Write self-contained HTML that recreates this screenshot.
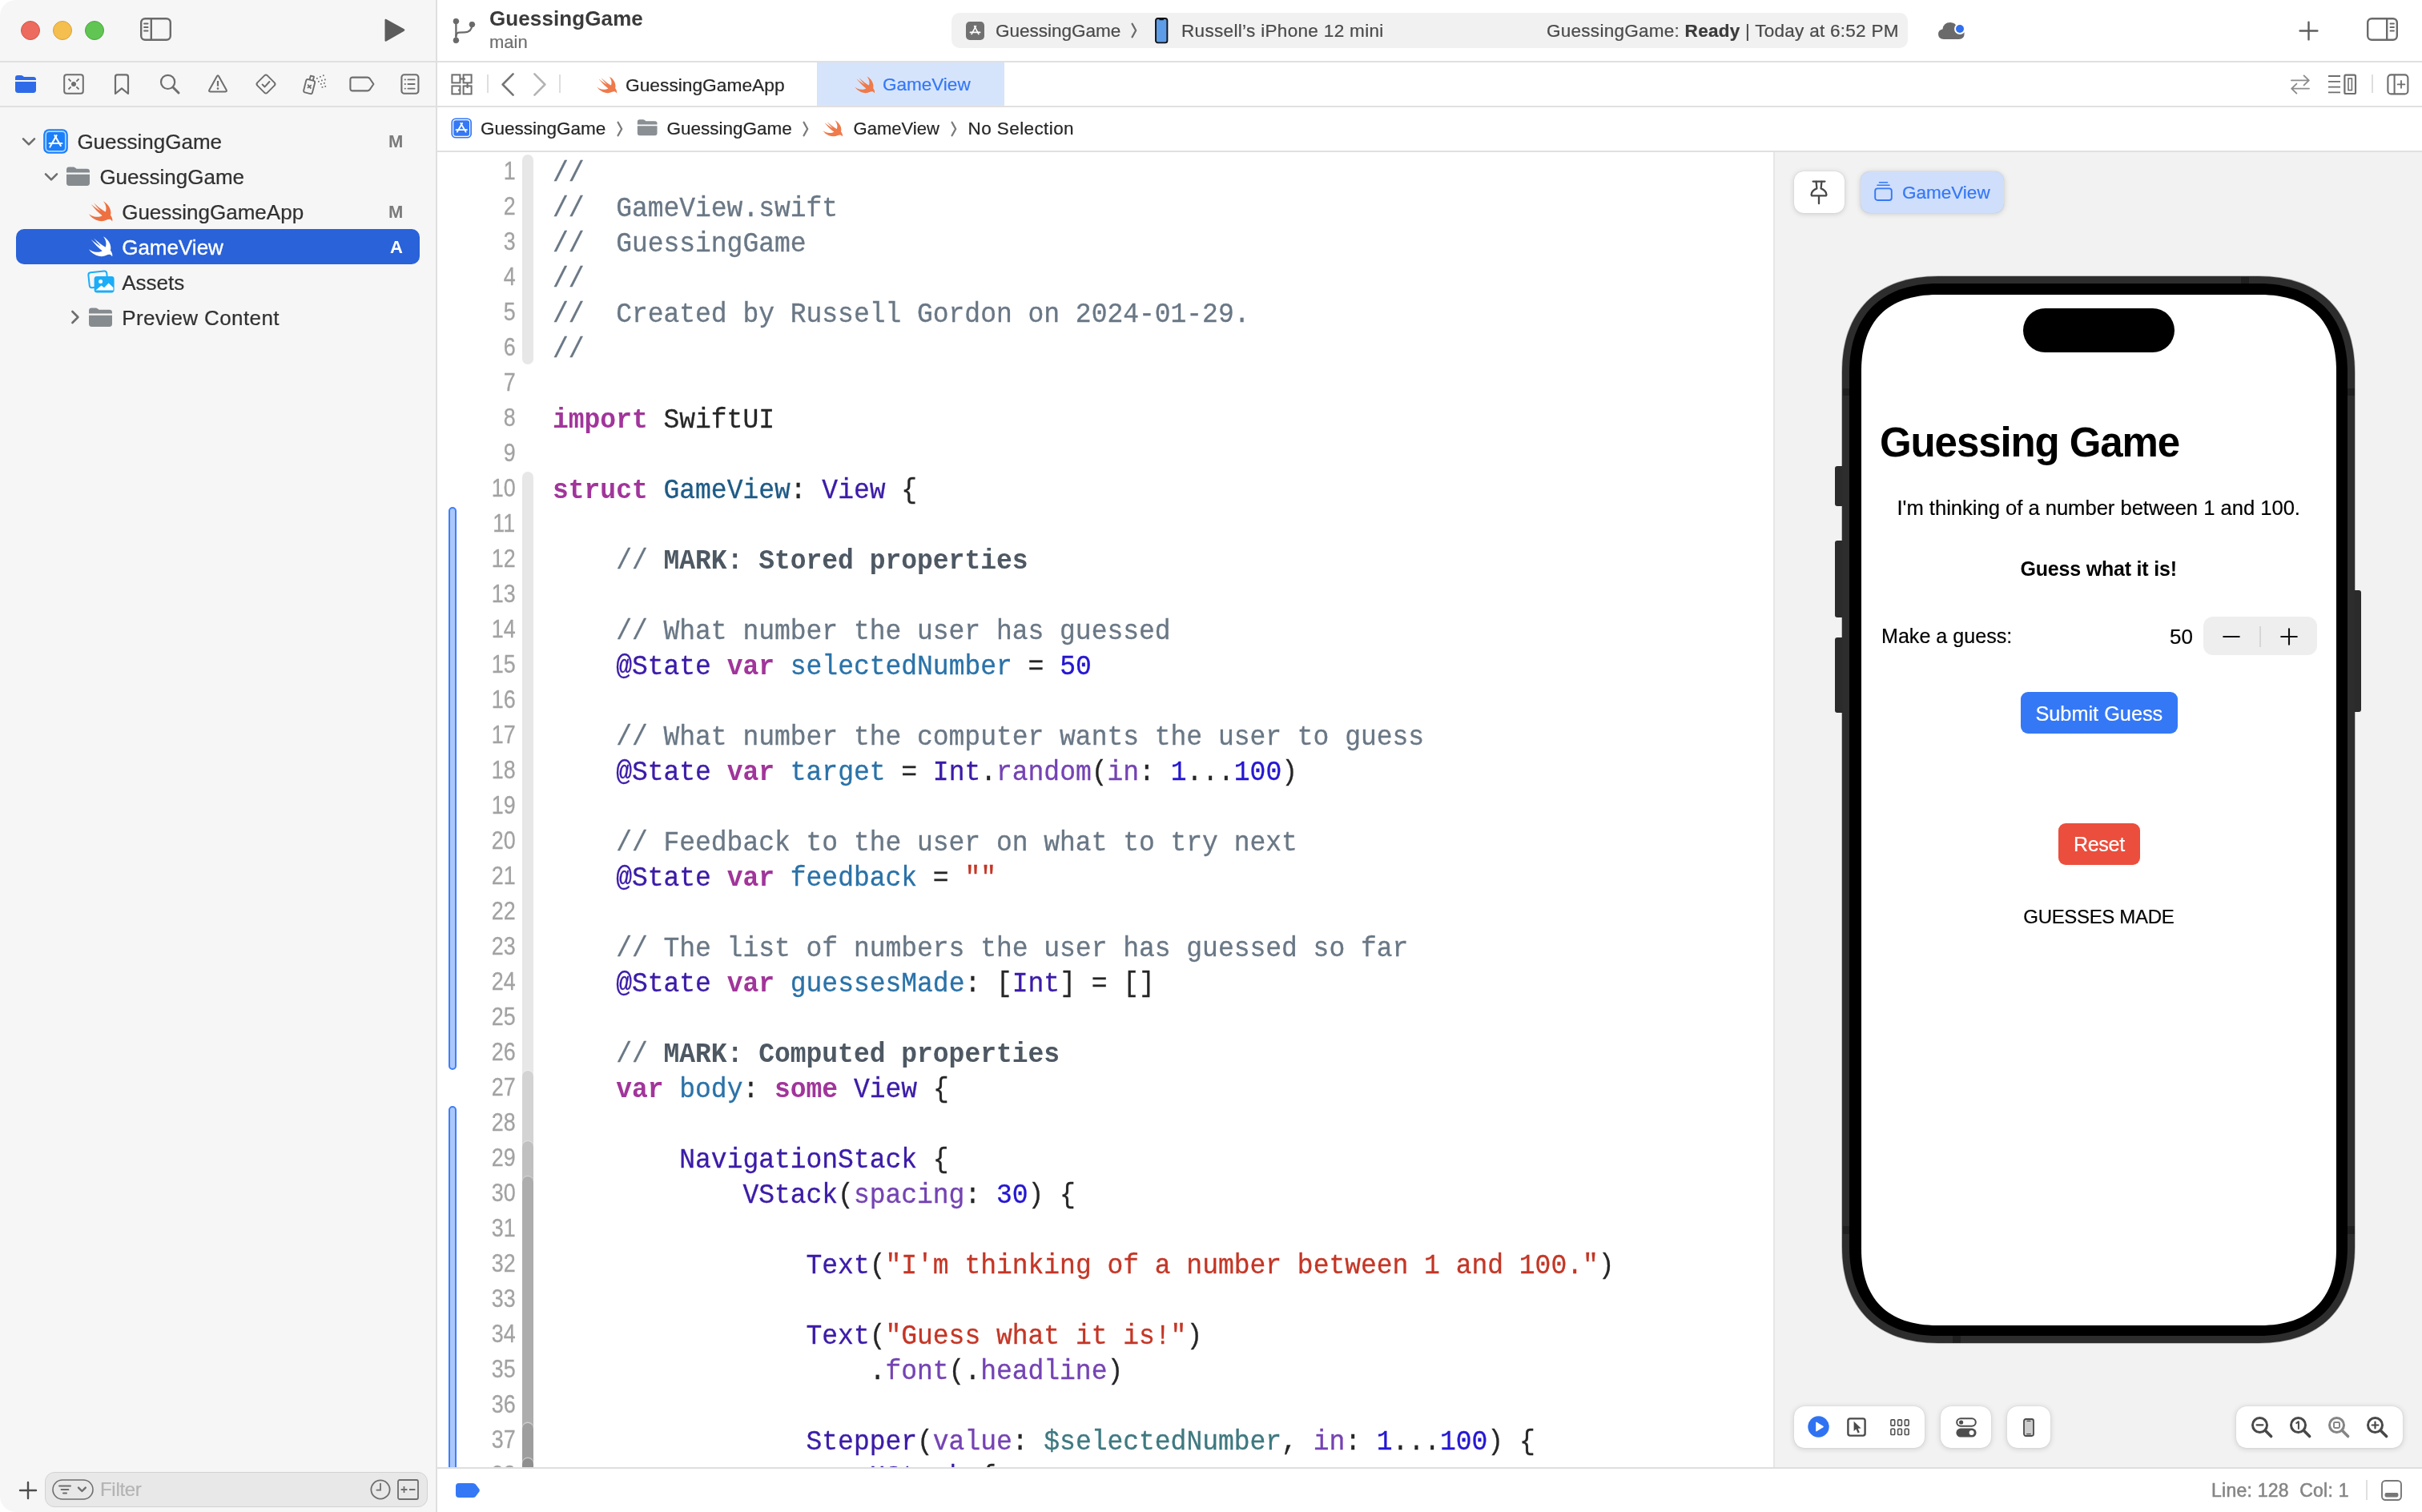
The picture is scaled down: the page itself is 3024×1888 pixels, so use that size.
<!DOCTYPE html>
<html lang="en">
<head>
<meta charset="utf-8">
<title>GuessingGame — GameView.swift</title>
<style>
*{box-sizing:border-box;margin:0;padding:0}
html,body{width:3024px;height:1888px;overflow:hidden;background:#fff}
body{font-family:"Liberation Sans",sans-serif;color:#262626;position:relative;-webkit-font-smoothing:antialiased}
.abs{position:absolute}
.t{position:absolute;white-space:pre;line-height:1;-webkit-text-stroke:.22px}
svg{position:absolute;overflow:visible}
#win{position:absolute;left:0;top:0;width:3024px;height:1888px;overflow:hidden;border-radius:20px 0 0 20px;will-change:transform}
#sidebar{position:absolute;left:0;top:0;width:544px;height:1888px;background:#f6f6f6}
.hl{position:absolute;height:2px;background:#e0e0e0}
.vl{position:absolute;width:2px;background:#dfdfdf}
.ui{font-size:22.5px;color:#262626}
.row{position:absolute;left:0;width:544px;height:44px}
.row .t{top:9.5px;font-size:26px;color:#313131}
.badge{position:absolute;top:12px;font-size:22px;font-weight:700;color:#7b7b7b;line-height:1}
/* code */
#code{position:absolute;left:546px;top:190px;width:1668px;height:1642px;overflow:hidden;background:#fff}
.ln{position:absolute;left:0;height:44px;width:1668px}
.ln .n{position:absolute;right:1570.6px;top:6.3px;font-size:32px;color:#a2a2a2;line-height:30px;white-space:pre;transform:scaleX(.84);transform-origin:100% 50%;-webkit-text-stroke:.3px}
.ln .c{position:absolute;left:144px;top:4px;font-family:"Liberation Mono",monospace;font-size:33px;letter-spacing:-0.02px;line-height:44px;white-space:pre;color:#262626;-webkit-text-stroke:.3px;transform:scaleY(1.05);transform-origin:0 30.8px}
.cm{color:#697785}.mk{color:#4d5863;font-weight:700;-webkit-text-stroke:0}.kw{color:#a1359a;font-weight:700;-webkit-text-stroke:0}
.dc{color:#2a72a8}.td{color:#1d5a86}.ty{color:#3b1ba8}.fn{color:#7443b3}.nu{color:#2416d2}.st{color:#c43626}.pv{color:#3f7980}
/* preview */
#canvas{position:absolute;left:2216px;top:190px;width:808px;height:1642px;background:#f2f2f2}
.btn{position:absolute;background:#fff;border-radius:13px;box-shadow:0 0 1px rgba(0,0,0,.18),0 1px 7px rgba(0,0,0,.17)}
.ph{position:absolute;white-space:pre;line-height:1;color:#000;-webkit-text-stroke:.2px}
</style>
</head>
<body>
<div id="win">
<div id="sidebar">
  <!-- traffic lights -->
  <div class="abs" style="left:26px;top:26px;width:24px;height:24px;border-radius:50%;background:#ed6a5e;border:1px solid #d5544a"></div>
  <div class="abs" style="left:66px;top:26px;width:24px;height:24px;border-radius:50%;background:#f5bf4f;border:1px solid #d8a13a"></div>
  <div class="abs" style="left:106px;top:26px;width:24px;height:24px;border-radius:50%;background:#61c554;border:1px solid #4aa73c"></div>
  <!-- sidebar toggle -->
  <svg style="left:174px;top:21.3px" width="41" height="31" viewBox="0 0 41 31" fill="none" stroke="#6a6a6a" stroke-width="2.4" stroke-linecap="round">
    <rect x="2.2" y="2.2" width="36.6" height="26.6" rx="5"/>
    <line x1="14.8" y1="2.5" x2="14.8" y2="28.5" stroke-linecap="butt"/>
    <g stroke-width="1.8"><line x1="6" y1="8.5" x2="10.6" y2="8.5"/><line x1="6" y1="13" x2="10.6" y2="13"/><line x1="6" y1="17.5" x2="10.6" y2="17.5"/></g>
  </svg>
  <!-- run -->
  <svg style="left:478px;top:22px" width="30" height="32" viewBox="0 0 30 32"><path d="M2.5 3.2 Q2.5 1.2 4.3 2.1 L26.6 14.3 Q28.3 15.5 26.6 16.7 L4.3 29.4 Q2.5 30.3 2.5 28.3 Z" fill="#5c5c5c"/></svg>
  <div class="hl" style="left:0;top:76px;width:544px"></div>
  <!-- navigator icons -->
  <svg style="left:18px;top:92px" width="28" height="26" viewBox="0 0 28 26"><path d="M1 5.2 Q1 2 4.2 2 H8 Q9.6 2 10.8 3 L12 4 H23.6 Q27 4 27 7.2 V8 H1 Z M1 10 H27 V20.6 Q27 24 23.6 24 H4.4 Q1 24 1 20.6 Z" fill="#2f6be8"/></svg>
  <svg style="left:79px;top:92px" width="26" height="26" viewBox="0 0 26 26" fill="none" stroke="#6e6e6e" stroke-width="2"><rect x="1.2" y="1.2" width="23.6" height="23.6" rx="3"/><circle cx="13" cy="13" r="3" fill="#6e6e6e" stroke="none"/><path d="M6.5 6.5 L9.6 9.6 M19.5 6.5 L16.4 9.6 M6.5 19.5 L9.6 16.4 M19.5 19.5 L16.4 16.4" stroke-width="1.8"/></svg>
  <svg style="left:142px;top:92px" width="20" height="27" viewBox="0 0 20 27" fill="none" stroke="#6e6e6e" stroke-width="2.2" stroke-linejoin="round"><path d="M2 4 Q2 1.4 4.4 1.4 H15.6 Q18 1.4 18 4 V25 L10 18.4 L2 25 Z"/></svg>
  <svg style="left:198px;top:91px" width="28" height="28" viewBox="0 0 28 28" fill="none" stroke="#6e6e6e" stroke-width="2.2" stroke-linecap="round"><circle cx="11.6" cy="11.4" r="8.6"/><line x1="18" y1="18" x2="25" y2="25" stroke-width="3"/></svg>
  <svg style="left:259px;top:91px" width="26" height="26" viewBox="0 0 26 26" fill="none" stroke="#6e6e6e" stroke-width="2" stroke-linejoin="round"><path d="M11.7 4.4 Q13 2 14.3 4.4 L23.6 21.2 Q24.8 23.4 22.4 23.4 H3.6 Q1.2 23.4 2.4 21.2 Z"/><line x1="13" y1="10" x2="13" y2="16.6" stroke-width="2.2"/><circle cx="13" cy="19.6" r="1.3" fill="#6e6e6e" stroke="none"/></svg>
  <svg style="left:318px;top:91px" width="28" height="28" viewBox="0 0 28 28" fill="none" stroke="#6e6e6e" stroke-width="2" stroke-linejoin="round" stroke-linecap="round"><rect x="5.2" y="5.2" width="17.6" height="17.6" rx="2.6" transform="rotate(45 14 14)"/><path d="M9.6 14.6 L12.6 17.4 L18.4 11"/></svg>
  <svg style="left:377px;top:91px" width="31" height="29" viewBox="0 0 31 29" fill="none" stroke="#6e6e6e" stroke-width="1.9" stroke-linejoin="round"><path d="M5.2 9.6 Q5.8 7.6 7.8 8.1 L14.6 9.9 Q16.6 10.4 16.1 12.4 L13 24.6 Q12.5 26.6 10.5 26.1 L3.7 24.3 Q1.7 23.8 2.2 21.8 Z"/><path d="M9.6 8.3 L10.9 3.6 L15 4.7 L13.8 9.4"/><path d="M7.2 14.6 L11.4 19.6 M11.8 15.3 L6.8 18.9" stroke-width="1.7"/><g fill="#6e6e6e" stroke="none"><rect x="18" y="6" width="1.7" height="1.7"/><rect x="22" y="4" width="1.7" height="1.7"/><rect x="26" y="2.4" width="1.7" height="1.7"/><rect x="20" y="10" width="1.7" height="1.7"/><rect x="24" y="8.6" width="1.7" height="1.7"/><rect x="28" y="7.6" width="1.7" height="1.7"/><rect x="23" y="13" width="1.7" height="1.7"/><rect x="27" y="12" width="1.7" height="1.7"/><rect x="24.6" y="17" width="1.7" height="1.7"/><rect x="28.4" y="16" width="1.7" height="1.7"/></g></svg>
  <svg style="left:436px;top:95px" width="32" height="20" viewBox="0 0 32 20" fill="none" stroke="#6e6e6e" stroke-width="2.1" stroke-linejoin="round"><path d="M4.4 1.6 H22.6 Q24.4 1.6 25.6 3 L30.4 10 L25.6 17 Q24.4 18.4 22.6 18.4 H4.4 Q1.4 18.4 1.4 15.6 V4.4 Q1.4 1.6 4.4 1.6 Z"/></svg>
  <svg style="left:500px;top:92px" width="24" height="26" viewBox="0 0 24 26" fill="none" stroke="#6e6e6e" stroke-width="2.1" stroke-linecap="round"><rect x="1.4" y="1.2" width="21" height="23.6" rx="3.4"/><g stroke-width="1.8"><line x1="9.4" y1="7.4" x2="17.6" y2="7.4"/><line x1="9.4" y1="13" x2="17.6" y2="13"/><line x1="9.4" y1="18.6" x2="17.6" y2="18.6"/><line x1="5.6" y1="7.4" x2="6" y2="7.4"/><line x1="5.6" y1="13" x2="6" y2="13"/><line x1="5.6" y1="18.6" x2="6" y2="18.6"/></g></svg>
  <div class="hl" style="left:0;top:132px;width:544px"></div>

  <!-- tree -->
  <div class="row" style="top:154px">
    <svg style="left:27.1px;top:16.8px" width="18" height="12" viewBox="0 0 18 12" fill="none" stroke="#6e6e6e" stroke-width="2.6" stroke-linecap="round" stroke-linejoin="round"><path d="M2 2.4 L9 9.4 L16 2.4"/></svg>
    <svg style="left:54px;top:6.6px" width="31" height="31" viewBox="0 0 31 31"><rect x="0.2" y="0.2" width="30.6" height="30.6" rx="6.8" fill="#1a7ffa"/><rect x="3.2" y="3.2" width="24.6" height="24.6" rx="4" fill="none" stroke="#fff" stroke-opacity=".68" stroke-width="1.7"/><g stroke="#fff" stroke-width="2.1" stroke-linecap="round" fill="none"><path d="M16.6 8.2 L9.2 21"/><path d="M14.4 8.2 L21.8 21"/><path d="M7.6 18 H23.4"/></g><circle cx="8.4" cy="22.6" r="1.1" fill="#fff"/></svg>
    <div class="t" style="left:96.4px">GuessingGame</div>
    <div class="badge" style="left:485px">M</div>
  </div>
  <div class="row" style="top:198px">
    <svg style="left:55.3px;top:16.8px" width="18" height="12" viewBox="0 0 18 12" fill="none" stroke="#6e6e6e" stroke-width="2.6" stroke-linecap="round" stroke-linejoin="round"><path d="M2 2.4 L9 9.4 L16 2.4"/></svg>
    <svg style="left:82px;top:10px" width="31" height="25" viewBox="0 0 31 25"><path d="M1 3.8 Q1 0.4 4.4 0.4 H9.2 Q10.8 0.4 12 1.4 L13.6 2.8 H26.6 Q30 2.8 30 6.2 V7.6 H1 Z M1 9.8 H30 V20.6 Q30 24 26.6 24 H4.4 Q1 24 1 20.6 Z" fill="#868b90"/></svg>
    <div class="t" style="left:124.4px">GuessingGame</div>
  </div>
  <div class="row" style="top:242px">
    <svg style="left:106.7px;top:4.2px" width="39" height="37" viewBox="0 0 24 24" preserveAspectRatio="none"><path fill="#ee7040" d="M13.543 3.41c4.114 2.47 6.545 7.162 5.549 11.131-.024.093-.05.181-.076.272l.002.001c2.062 2.538 1.5 5.258 1.236 4.745-1.072-2.086-3.066-1.568-4.088-1.043a6.803 6.803 0 0 1-.281.158l-.02.012-.002.002c-2.115 1.123-4.957 1.205-7.812-.022a12.568 12.568 0 0 1-5.64-4.838c.649.48 1.35.902 2.097 1.252 3.019 1.414 6.051 1.311 8.197-.002C9.651 12.73 7.101 9.67 5.146 7.191a10.628 10.628 0 0 1-1.005-1.384c2.34 2.142 6.038 4.83 7.365 5.576C8.69 8.408 6.208 4.743 6.324 4.86c4.436 4.47 8.528 6.996 8.528 6.996.154.085.27.154.36.213.085-.215.16-.437.224-.668.708-2.588-.09-5.548-1.893-7.992z"/></svg>
    <div class="t" style="left:152.2px">GuessingGameApp</div>
    <div class="badge" style="left:485px">M</div>
  </div>
  <div class="abs" style="left:20px;top:286px;width:504px;height:44px;border-radius:10px;background:#2962d9"></div>
  <div class="row" style="top:286px">
    <svg style="left:106.7px;top:4.2px" width="39" height="37" viewBox="0 0 24 24" preserveAspectRatio="none"><path fill="#fff" d="M13.543 3.41c4.114 2.47 6.545 7.162 5.549 11.131-.024.093-.05.181-.076.272l.002.001c2.062 2.538 1.5 5.258 1.236 4.745-1.072-2.086-3.066-1.568-4.088-1.043a6.803 6.803 0 0 1-.281.158l-.02.012-.002.002c-2.115 1.123-4.957 1.205-7.812-.022a12.568 12.568 0 0 1-5.64-4.838c.649.48 1.35.902 2.097 1.252 3.019 1.414 6.051 1.311 8.197-.002C9.651 12.73 7.101 9.67 5.146 7.191a10.628 10.628 0 0 1-1.005-1.384c2.34 2.142 6.038 4.83 7.365 5.576C8.69 8.408 6.208 4.743 6.324 4.86c4.436 4.47 8.528 6.996 8.528 6.996.154.085.27.154.36.213.085-.215.16-.437.224-.668.708-2.588-.09-5.548-1.893-7.992z"/></svg>
    <div class="t" style="left:152.2px;color:#fff;-webkit-text-stroke:.35px #fff">GameView</div>
    <div class="badge" style="left:487px;color:#fff">A</div>
  </div>
  <div class="row" style="top:330px">
    <svg style="left:109px;top:7px" width="35" height="30" viewBox="0 0 35 30"><rect x="2" y="2.4" width="23" height="19" rx="3" fill="#f6f6f6" stroke="#1badf8" stroke-width="2" transform="rotate(-6 13 12)"/><rect x="8.6" y="8" width="25" height="20.4" rx="3.4" fill="#1badf8"/><circle cx="16.6" cy="14.4" r="2.5" fill="#fff"/><path d="M10.4 25.6 L17.6 19.4 L21 22.2 L26.6 16.4 L32.4 22 V25.6 Z" fill="#fff"/></svg>
    <div class="t" style="left:152.2px">Assets</div>
  </div>
  <div class="row" style="top:374px">
    <svg style="left:88px;top:13px" width="12" height="18" viewBox="0 0 12 18" fill="none" stroke="#6e6e6e" stroke-width="2.6" stroke-linecap="round" stroke-linejoin="round"><path d="M2.4 2 L9.4 9 L2.4 16"/></svg>
    <svg style="left:110px;top:10px" width="31" height="25" viewBox="0 0 31 25"><path d="M1 3.8 Q1 0.4 4.4 0.4 H9.2 Q10.8 0.4 12 1.4 L13.6 2.8 H26.6 Q30 2.8 30 6.2 V7.6 H1 Z M1 9.8 H30 V20.6 Q30 24 26.6 24 H4.4 Q1 24 1 20.6 Z" fill="#868b90"/></svg>
    <div class="t" style="left:152.2px;letter-spacing:.4px">Preview Content</div>
  </div>

  <!-- bottom filter -->
  <svg style="left:23px;top:1849px" width="24" height="24" viewBox="0 0 24 24" stroke="#4d4d4d" stroke-width="2.4" stroke-linecap="round"><path d="M12 2 V22 M2 12 H22"/></svg>
  <div class="abs" style="left:56px;top:1838px;width:478px;height:44px;border-radius:12px;background:#e8e8e8;border:1px solid #d2d2d2"></div>
  <svg style="left:65px;top:1847px" width="52" height="26" viewBox="0 0 52 26" fill="none" stroke="#6e6e6e" stroke-width="2" stroke-linecap="round" stroke-linejoin="round"><rect x="1" y="1" width="50" height="24" rx="12" stroke-width="1.6"/><path d="M9 8.4 H23 M11.6 13 H20.4 M14 17.6 H18"/><path d="M33 10.6 L37.4 15 L41.8 10.6" stroke-width="2.4"/></svg>
  <div class="t" style="left:125px;top:1848px;font-size:24px;color:#b4b4b4;letter-spacing:-.3px">Filter</div>
  <svg style="left:462px;top:1847px" width="26" height="26" viewBox="0 0 26 26" fill="none" stroke="#6e6e6e" stroke-width="1.8" stroke-linecap="round"><circle cx="13" cy="13" r="11.6"/><path d="M13 5.6 V13.6 H8.4"/></svg>
  <svg style="left:496px;top:1847px" width="27" height="26" viewBox="0 0 27 26" fill="none" stroke="#6e6e6e" stroke-width="1.8"><rect x="1" y="1" width="25" height="24" rx="2"/><path d="M4.6 13 H12.4 M8.5 9 V17 M15 13 H22.4" stroke-width="1.8"/></svg>
</div>
<div class="vl" style="left:544px;top:0;height:1888px"></div>
<!-- title bar -->
<svg style="left:563px;top:21px" width="33" height="35" viewBox="0 0 33 35" fill="none" stroke="#6a6a6a" stroke-width="2.3" stroke-linecap="round"><circle cx="6.4" cy="5.6" r="3.3" fill="#6a6a6a" stroke-width="1"/><circle cx="6.4" cy="29.4" r="3.3" fill="#6a6a6a" stroke-width="1"/><circle cx="26.4" cy="9.6" r="3.3" fill="#6a6a6a" stroke-width="1"/><path d="M6.4 6 V29"/><path d="M26.4 10 Q26 19 17 19.4 L10 19.6 Q6.6 20 6.4 24"/></svg>
<div class="t" style="left:611px;top:10px;font-size:26px;font-weight:700;color:#3a3a3a;letter-spacing:.1px;-webkit-text-stroke:0">GuessingGame</div>
<div class="t" style="left:611px;top:42px;font-size:22px;color:#6f6f6f">main</div>

<div class="abs" style="left:1188px;top:16px;width:1194px;height:44px;border-radius:10px;background:#f1f1f1"></div>
<svg style="left:1206px;top:26.8px" width="23" height="23" viewBox="0 0 24 23" preserveAspectRatio="none"><rect x="0" y="0" width="24" height="23" rx="5" fill="#717171"/><g stroke="#fff" stroke-width="1.7" stroke-linecap="round" fill="none"><path d="M12.9 5.6 L7.4 15.6"/><path d="M11.1 5.6 L16.6 15.6"/><path d="M5.6 13.4 H18.4"/></g></svg>
<div class="t ui" style="left:1243px;top:28px;color:#4a4a4a">GuessingGame</div>
<svg style="left:1412px;top:28px" width="8" height="20" viewBox="0 0 8 20" fill="none" stroke="#6a6a6a" stroke-width="2.3" stroke-linecap="round" stroke-linejoin="round"><path d="M1.6 1.8 L6.2 10 L1.6 18.2"/></svg>
<svg style="left:1441.8px;top:21.8px" width="16.4" height="32.4" viewBox="0 0 16.4 32.4"><rect x="1" y="1" width="14.4" height="30.4" rx="2.6" fill="#5d9ce7" stroke="#111" stroke-width="1.9"/><rect x="5.4" y="1.4" width="5.6" height="1.9" rx=".9" fill="#111"/></svg>
<div class="t ui" style="left:1475px;top:28px;color:#4a4a4a;letter-spacing:.33px">Russell’s iPhone 12 mini</div>
<div class="t ui" style="left:1931px;top:28px;color:#4a4a4a;letter-spacing:.27px">GuessingGame: <b style="color:#3a3a3a">Ready</b> | Today at 6:52 PM</div>
<svg style="left:2419px;top:27px" width="36" height="23" viewBox="0 0 36 23"><path d="M8 22 Q1 22 1 15.6 Q1 10.4 6.4 9.6 Q7.4 1 16 1 Q22.4 1 24.6 7 Q33.6 7.4 33.6 15 Q33.6 22 26.6 22 Z" fill="#6a6a6a"/><circle cx="28" cy="9" r="7" fill="#fff"/><circle cx="28" cy="9" r="5" fill="#2f6ff0"/></svg>
<svg style="left:2870px;top:26px" width="25" height="25" viewBox="0 0 25 25" stroke="#5e5e5e" stroke-width="2.4" stroke-linecap="round"><path d="M12.5 1.6 V23.4 M1.6 12.5 H23.4"/></svg>
<svg style="left:2954px;top:21.3px" width="41" height="31" viewBox="0 0 41 31" fill="none" stroke="#6a6a6a" stroke-width="2.4" stroke-linecap="round"><rect x="2.2" y="2.2" width="36.6" height="26.6" rx="5"/><line x1="26.2" y1="2.5" x2="26.2" y2="28.5" stroke-linecap="butt"/><g stroke-width="1.8"><line x1="30.4" y1="8.5" x2="35" y2="8.5"/><line x1="30.4" y1="13" x2="35" y2="13"/><line x1="30.4" y1="17.5" x2="35" y2="17.5"/></g></svg>
<div class="hl" style="left:546px;top:76px;width:2478px"></div>

<!-- tab bar -->
<svg style="left:563px;top:92px" width="28" height="27" viewBox="0 0 28 27" fill="none" stroke="#6e6e6e" stroke-width="2"><rect x="1.4" y="1.4" width="10" height="10"/><rect x="15.6" y="1.4" width="10" height="10"/><rect x="1.4" y="15.4" width="10" height="10"/><rect x="15.6" y="15.4" width="10" height="10"/><path d="M11.4 6.4 H18 M20.6 11.4 V18 M11.4 20.4 H9"/></svg>
<div class="abs" style="left:608px;top:93px;width:2px;height:23px;background:#dedede"></div>
<svg style="left:624px;top:90px" width="20" height="31" viewBox="0 0 20 31" fill="none" stroke="#757575" stroke-width="2.6" stroke-linecap="round" stroke-linejoin="round"><path d="M16.6 2.4 L3.6 15.5 L16.6 28.6"/></svg>
<svg style="left:664px;top:90px" width="20" height="31" viewBox="0 0 20 31" fill="none" stroke="#b4b4b4" stroke-width="2.6" stroke-linecap="round" stroke-linejoin="round"><path d="M3.4 2.4 L16.4 15.5 L3.4 28.6"/></svg>
<div class="abs" style="left:698px;top:93px;width:2px;height:23px;background:#dedede"></div>
<svg style="left:741.9px;top:90.5px" width="32.9" height="30.9" viewBox="0 0 24 24" preserveAspectRatio="none"><path fill="#ef7a4b" d="M13.543 3.41c4.114 2.47 6.545 7.162 5.549 11.131-.024.093-.05.181-.076.272l.002.001c2.062 2.538 1.5 5.258 1.236 4.745-1.072-2.086-3.066-1.568-4.088-1.043a6.803 6.803 0 0 1-.281.158l-.02.012-.002.002c-2.115 1.123-4.957 1.205-7.812-.022a12.568 12.568 0 0 1-5.64-4.838c.649.48 1.35.902 2.097 1.252 3.019 1.414 6.051 1.311 8.197-.002C9.651 12.73 7.101 9.67 5.146 7.191a10.628 10.628 0 0 1-1.005-1.384c2.34 2.142 6.038 4.83 7.365 5.576C8.69 8.408 6.208 4.743 6.324 4.86c4.436 4.47 8.528 6.996 8.528 6.996.154.085.27.154.36.213.085-.215.16-.437.224-.668.708-2.588-.09-5.548-1.893-7.992z"/></svg>
<div class="t ui" style="left:781px;top:94.8px;font-size:22.75px">GuessingGameApp</div>
<div class="abs" style="left:1020px;top:78px;width:234px;height:54px;background:#d6e4fb"></div>
<svg style="left:1064.4px;top:90.5px" width="32.9" height="30.9" viewBox="0 0 24 24" preserveAspectRatio="none"><path fill="#ef7a4b" d="M13.543 3.41c4.114 2.47 6.545 7.162 5.549 11.131-.024.093-.05.181-.076.272l.002.001c2.062 2.538 1.5 5.258 1.236 4.745-1.072-2.086-3.066-1.568-4.088-1.043a6.803 6.803 0 0 1-.281.158l-.02.012-.002.002c-2.115 1.123-4.957 1.205-7.812-.022a12.568 12.568 0 0 1-5.64-4.838c.649.48 1.35.902 2.097 1.252 3.019 1.414 6.051 1.311 8.197-.002C9.651 12.73 7.101 9.67 5.146 7.191a10.628 10.628 0 0 1-1.005-1.384c2.34 2.142 6.038 4.83 7.365 5.576C8.69 8.408 6.208 4.743 6.324 4.86c4.436 4.47 8.528 6.996 8.528 6.996.154.085.27.154.36.213.085-.215.16-.437.224-.668.708-2.588-.09-5.548-1.893-7.992z"/></svg>
<div class="t ui" style="left:1102px;top:94.8px;color:#3478f6">GameView</div>
<svg style="left:2858.4px;top:92px" width="28" height="27" viewBox="0 0 28 27" fill="none" stroke="#8c8c8c" stroke-width="1.9" stroke-linecap="round" stroke-linejoin="round"><path d="M3 8.4 H24.6 M18.6 2.4 L24.8 8.4 L18.6 14.4"/><path d="M25 18.6 H3.4 M9.4 12.6 L3.2 18.6 L9.4 24.6"/></svg>
<svg style="left:2906px;top:92px" width="37" height="27" viewBox="0 0 37 27" fill="none" stroke="#6e6e6e" stroke-width="1.8"><path d="M1 3 H16 M1 9.8 H16 M1 16.6 H16 M1 23.4 H16"/><rect x="21.4" y="1.6" width="13.6" height="23.4" rx="1.6" stroke-width="2.2"/><rect x="26" y="6" width="4.4" height="14.6" stroke-width="1.6"/></svg>
<div class="abs" style="left:2961px;top:93px;width:2px;height:23px;background:#dedede"></div>
<svg style="left:2980px;top:92px" width="28" height="27" viewBox="0 0 28 27" fill="none" stroke="#6e6e6e" stroke-width="2.1" stroke-linecap="round"><rect x="1.4" y="1.4" width="25" height="24" rx="4"/><path d="M9.6 1.6 V25.2" stroke-linecap="butt"/><path d="M13.6 13.4 H22.4 M18 9 V17.8" stroke-width="1.8"/></svg>
<div class="hl" style="left:546px;top:132px;width:2478px"></div>

<!-- breadcrumb -->
<svg style="left:562.6px;top:147.3px" width="26.4" height="26" viewBox="0 0 31 31" preserveAspectRatio="none"><rect x="0.5" y="0.5" width="30" height="30" rx="6.5" fill="#3478f6"/><rect x="3.2" y="3.2" width="24.6" height="24.6" rx="4" fill="none" stroke="#fff" stroke-width="1.4"/><g stroke="#fff" stroke-width="2.2" stroke-linecap="round" fill="none"><path d="M16.6 8.2 L9.2 21"/><path d="M14.4 8.2 L21.8 21"/><path d="M7.6 18 H23.4"/></g></svg>
<div class="t ui" style="left:600px;top:150.2px">GuessingGame</div>
<svg style="left:770.4px;top:151px" width="8" height="20" viewBox="0 0 8 20" fill="none" stroke="#7a7a7a" stroke-width="2.3" stroke-linecap="round" stroke-linejoin="round"><path d="M1.6 1.8 L6.2 10 L1.6 18.2"/></svg>
<svg style="left:794.6px;top:149.4px" width="26.4" height="21" viewBox="0 0 31 25" preserveAspectRatio="none"><path d="M1 3.8 Q1 0.4 4.4 0.4 H9.2 Q10.8 0.4 12 1.4 L13.6 2.8 H26.6 Q30 2.8 30 6.2 V7.6 H1 Z M1 9.8 H30 V20.6 Q30 24 26.6 24 H4.4 Q1 24 1 20.6 Z" fill="#8a8f94"/></svg>
<div class="t ui" style="left:832.4px;top:150.2px">GuessingGame</div>
<svg style="left:1002px;top:151px" width="8" height="20" viewBox="0 0 8 20" fill="none" stroke="#7a7a7a" stroke-width="2.3" stroke-linecap="round" stroke-linejoin="round"><path d="M1.6 1.8 L6.2 10 L1.6 18.2"/></svg>
<svg style="left:1024px;top:146px" width="32.8" height="29.9" viewBox="0 0 24 24" preserveAspectRatio="none"><path fill="#ef7a4b" d="M13.543 3.41c4.114 2.47 6.545 7.162 5.549 11.131-.024.093-.05.181-.076.272l.002.001c2.062 2.538 1.5 5.258 1.236 4.745-1.072-2.086-3.066-1.568-4.088-1.043a6.803 6.803 0 0 1-.281.158l-.02.012-.002.002c-2.115 1.123-4.957 1.205-7.812-.022a12.568 12.568 0 0 1-5.64-4.838c.649.48 1.35.902 2.097 1.252 3.019 1.414 6.051 1.311 8.197-.002C9.651 12.73 7.101 9.67 5.146 7.191a10.628 10.628 0 0 1-1.005-1.384c2.34 2.142 6.038 4.83 7.365 5.576C8.69 8.408 6.208 4.743 6.324 4.86c4.436 4.47 8.528 6.996 8.528 6.996.154.085.27.154.36.213.085-.215.16-.437.224-.668.708-2.588-.09-5.548-1.893-7.992z"/></svg>
<div class="t ui" style="left:1065.6px;top:150.4px;font-size:22px">GameView</div>
<svg style="left:1186.6px;top:151px" width="8" height="20" viewBox="0 0 8 20" fill="none" stroke="#7a7a7a" stroke-width="2.3" stroke-linecap="round" stroke-linejoin="round"><path d="M1.6 1.8 L6.2 10 L1.6 18.2"/></svg>
<div class="t ui" style="left:1208.6px;top:150.2px;letter-spacing:.4px">No Selection</div>
<div class="hl" style="left:546px;top:188px;width:2478px"></div>
<!-- editor -->
<div id="code">
  <div class="abs" style="left:106px;top:3px;width:14px;height:262px;border-radius:7px;background:#e7e7e7"></div>
  <div class="abs" style="left:106px;top:399px;width:14px;height:1300px;border-radius:7px 7px 0 0;background:#e7e7e7"></div>
  <div class="abs" style="left:106px;top:1147px;width:14px;height:600px;border-radius:7px 7px 0 0;background:#d3d3d3;box-shadow:0 -1px 0 #efefef"></div>
  <div class="abs" style="left:106px;top:1235px;width:14px;height:500px;border-radius:7px 7px 0 0;background:#c0c0c0;box-shadow:0 -1px 0 #e2e2e2"></div>
  <div class="abs" style="left:106px;top:1279px;width:14px;height:500px;border-radius:7px 7px 0 0;background:#adadad;box-shadow:0 -1px 0 #d6d6d6"></div>
  <div class="abs" style="left:106px;top:1587px;width:14px;height:100px;border-radius:7px 7px 0 0;background:#9e9e9e;box-shadow:0 -1.5px 0 #cfcfcf"></div>
  <div class="abs" style="left:106px;top:1631px;width:14px;height:100px;border-radius:7px 7px 0 0;background:#8f8f8f;box-shadow:0 -1.5px 0 #c6c6c6"></div>
  <div class="abs" style="left:14px;top:443px;width:10px;height:703px;border-radius:5px;background:#aac8fb;border:2px solid #3f7ff7"></div>
  <div class="abs" style="left:14px;top:1191px;width:10px;height:600px;border-radius:5px;background:#aac8fb;border:2px solid #3f7ff7"></div>
<div class="ln" style="top:2px"><span class="n">1</span><span class="c"><span class="cm">//</span></span></div>
<div class="ln" style="top:46px"><span class="n">2</span><span class="c"><span class="cm">//  GameView.swift</span></span></div>
<div class="ln" style="top:90px"><span class="n">3</span><span class="c"><span class="cm">//  GuessingGame</span></span></div>
<div class="ln" style="top:134px"><span class="n">4</span><span class="c"><span class="cm">//</span></span></div>
<div class="ln" style="top:178px"><span class="n">5</span><span class="c"><span class="cm">//  Created by Russell Gordon on 2024-01-29.</span></span></div>
<div class="ln" style="top:222px"><span class="n">6</span><span class="c"><span class="cm">//</span></span></div>
<div class="ln" style="top:266px"><span class="n">7</span><span class="c"></span></div>
<div class="ln" style="top:310px"><span class="n">8</span><span class="c"><span class="kw">import</span> SwiftUI</span></div>
<div class="ln" style="top:354px"><span class="n">9</span><span class="c"></span></div>
<div class="ln" style="top:398px"><span class="n">10</span><span class="c"><span class="kw">struct</span> <span class="td">GameView</span>: <span class="ty">View</span> {</span></div>
<div class="ln" style="top:442px"><span class="n">11</span><span class="c"></span></div>
<div class="ln" style="top:486px"><span class="n">12</span><span class="c">    <span class="cm">// </span><span class="mk">MARK: Stored properties</span></span></div>
<div class="ln" style="top:530px"><span class="n">13</span><span class="c"></span></div>
<div class="ln" style="top:574px"><span class="n">14</span><span class="c">    <span class="cm">// What number the user has guessed</span></span></div>
<div class="ln" style="top:618px"><span class="n">15</span><span class="c">    <span class="ty">@State</span> <span class="kw">var</span> <span class="dc">selectedNumber</span> = <span class="nu">50</span></span></div>
<div class="ln" style="top:662px"><span class="n">16</span><span class="c"></span></div>
<div class="ln" style="top:706px"><span class="n">17</span><span class="c">    <span class="cm">// What number the computer wants the user to guess</span></span></div>
<div class="ln" style="top:750px"><span class="n">18</span><span class="c">    <span class="ty">@State</span> <span class="kw">var</span> <span class="dc">target</span> = <span class="ty">Int</span>.<span class="fn">random</span>(<span class="fn">in</span>: <span class="nu">1</span>...<span class="nu">100</span>)</span></div>
<div class="ln" style="top:794px"><span class="n">19</span><span class="c"></span></div>
<div class="ln" style="top:838px"><span class="n">20</span><span class="c">    <span class="cm">// Feedback to the user on what to try next</span></span></div>
<div class="ln" style="top:882px"><span class="n">21</span><span class="c">    <span class="ty">@State</span> <span class="kw">var</span> <span class="dc">feedback</span> = <span class="st">""</span></span></div>
<div class="ln" style="top:926px"><span class="n">22</span><span class="c"></span></div>
<div class="ln" style="top:970px"><span class="n">23</span><span class="c">    <span class="cm">// The list of numbers the user has guessed so far</span></span></div>
<div class="ln" style="top:1014px"><span class="n">24</span><span class="c">    <span class="ty">@State</span> <span class="kw">var</span> <span class="dc">guessesMade</span>: [<span class="ty">Int</span>] = []</span></div>
<div class="ln" style="top:1058px"><span class="n">25</span><span class="c"></span></div>
<div class="ln" style="top:1102px"><span class="n">26</span><span class="c">    <span class="cm">// </span><span class="mk">MARK: Computed properties</span></span></div>
<div class="ln" style="top:1146px"><span class="n">27</span><span class="c">    <span class="kw">var</span> <span class="dc">body</span>: <span class="kw">some</span> <span class="ty">View</span> {</span></div>
<div class="ln" style="top:1190px"><span class="n">28</span><span class="c"></span></div>
<div class="ln" style="top:1234px"><span class="n">29</span><span class="c">        <span class="ty">NavigationStack</span> {</span></div>
<div class="ln" style="top:1278px"><span class="n">30</span><span class="c">            <span class="ty">VStack</span>(<span class="fn">spacing</span>: <span class="nu">30</span>) {</span></div>
<div class="ln" style="top:1322px"><span class="n">31</span><span class="c"></span></div>
<div class="ln" style="top:1366px"><span class="n">32</span><span class="c">                <span class="ty">Text</span>(<span class="st">"I'm thinking of a number between 1 and 100."</span>)</span></div>
<div class="ln" style="top:1410px"><span class="n">33</span><span class="c"></span></div>
<div class="ln" style="top:1454px"><span class="n">34</span><span class="c">                <span class="ty">Text</span>(<span class="st">"Guess what it is!"</span>)</span></div>
<div class="ln" style="top:1498px"><span class="n">35</span><span class="c">                    .<span class="fn">font</span>(.<span class="fn">headline</span>)</span></div>
<div class="ln" style="top:1542px"><span class="n">36</span><span class="c"></span></div>
<div class="ln" style="top:1586px"><span class="n">37</span><span class="c">                <span class="ty">Stepper</span>(<span class="fn">value</span>: <span class="pv">$selectedNumber</span>, <span class="fn">in</span>: <span class="nu">1</span>...<span class="nu">100</span>) {</span></div>
<div class="ln" style="top:1630px"><span class="n">38</span><span class="c">                    <span class="ty">HStack</span> {</span></div>
</div>
<div class="vl" style="left:2214px;top:190px;height:1642px;background:#e6e6e6"></div>
<!-- bottom bar -->
<div class="hl" style="left:546px;top:1832px;width:2478px;background:#dedede"></div>
<svg style="left:569px;top:1852px" width="30" height="18" viewBox="0 0 31 18" preserveAspectRatio="none"><path d="M4 0 H22 Q24.4 0 25.8 1.6 L30.4 7.4 Q31.4 9 30.4 10.6 L25.8 16.4 Q24.4 18 22 18 H4 Q0 18 0 14 V4 Q0 0 4 0 Z" fill="#3478f6"/></svg>
<div class="t" style="left:2761px;top:1849.6px;font-size:23px;letter-spacing:.25px;color:#858585;-webkit-text-stroke:.55px">Line: 128  Col: 1</div>
<div class="abs" style="left:2954px;top:1848px;width:2px;height:25px;background:#e0e0e0"></div>
<svg style="left:2973px;top:1848.4px" width="26" height="26" viewBox="0 0 26 26" fill="none" stroke="#787878" stroke-width="1.9"><rect x="1" y="1" width="24" height="24" rx="4.4"/><rect x="4.6" y="16" width="16.8" height="5.4" rx="1.8" fill="#787878" stroke="none"/></svg>
<!-- preview canvas -->
<div id="canvas"></div>
<div class="btn" style="left:2240px;top:214px;width:63px;height:52px;border-radius:12px"></div>
<svg style="left:2259px;top:223.6px" width="24" height="32" viewBox="0 0 24 32" fill="none" stroke="#484848" stroke-width="2.3" stroke-linecap="round" stroke-linejoin="round"><path d="M4.6 2.6 H19.4"/><path d="M8.6 3 L9.4 11.4 Q3 13.6 2.6 19 Q2.6 20.4 4 20.4 H20 Q21.4 20.4 21.4 19 Q21 13.6 14.6 11.4 L15.4 3"/><path d="M12 21 V30.2"/></svg>
<div class="btn" style="left:2323px;top:214px;width:179px;height:52px;border-radius:12px;background:#cfdefb"></div>
<svg style="left:2340px;top:226px" width="24" height="26" viewBox="0 0 24 26" fill="none" stroke="#3478f6" stroke-width="1.9" stroke-linecap="round"><rect x="1.2" y="9.4" width="20.6" height="14.6" rx="3"/><path d="M4 5.2 H19" stroke-width="1.6"/><path d="M6.4 1.8 H16.6" stroke-width="1.4"/></svg>
<div class="t" style="left:2375px;top:229.6px;font-size:22.5px;color:#3478f6">GameView</div>

<!-- phone -->
<div class="abs" style="left:2291px;top:582px;width:10px;height:50px;border-radius:3px 0 0 3px;background:#2b2b2b"></div>
<div class="abs" style="left:2291px;top:675px;width:10px;height:96px;border-radius:3px 0 0 3px;background:#2b2b2b"></div>
<div class="abs" style="left:2291px;top:796px;width:10px;height:94px;border-radius:3px 0 0 3px;background:#2b2b2b"></div>
<div class="abs" style="left:2938px;top:737px;width:10px;height:152px;border-radius:0 3px 3px 0;background:#2b2b2b"></div>
<svg style="left:2280px;top:335px" width="680" height="1352" viewBox="0 0 680 1352"><path d="M140 10 H540 C616.56 10 660 53.44 660 130 V1222 C660 1298.56 616.56 1342 540 1342 H140 C63.44 1342 20 1298.56 20 1222 V130 C20 53.44 63.44 10 140 10Z" fill="#2d2d2d" stroke="#2d2d2d" stroke-opacity=".35" stroke-width="1.6"/><path d="M140 19 H540 C611.04 19 651 58.96 651 130 V1222 C651 1293.04 611.04 1333 540 1333 H140 C68.96 1333 29 1293.04 29 1222 V130 C29 58.96 68.96 19 140 19Z" fill="#000"/><path d="M139 33 H542 C604.13 33 637 65.87 637 128 V1225 C637 1287.13 604.13 1320 542 1320 H139 C76.87 1320 44 1287.13 44 1225 V128 C44 65.87 76.87 33 139 33Z" fill="#fff"/></svg>
<div class="abs" style="left:2300.5px;top:484.5px;width:8.5px;height:9.5px;background:#202020"></div>
<div class="abs" style="left:2931px;top:484.5px;width:8.5px;height:9.5px;background:#202020"></div>
<div class="abs" style="left:2300.5px;top:1531px;width:8.5px;height:9.5px;background:#202020"></div>
<div class="abs" style="left:2931px;top:1531px;width:8.5px;height:9.5px;background:#202020"></div>
<div class="abs" style="left:2798px;top:345.5px;width:9.5px;height:8.5px;background:#202020"></div>
<div class="abs" style="left:2438px;top:1668px;width:9.5px;height:8.5px;background:#202020"></div>
<div class="abs" style="left:2526px;top:385px;width:189px;height:55px;border-radius:28px;background:#000"></div>

<div class="ph" style="left:2347px;top:526.5px;font-size:51px;font-weight:700;letter-spacing:-1.1px;-webkit-text-stroke:0">Guessing Game</div>
<div class="ph" style="left:2368.5px;top:622px;font-size:25.6px;letter-spacing:-.02px">I'm thinking of a number between 1 and 100.</div>
<div class="ph" style="left:2522.5px;top:697.5px;font-size:25px;font-weight:700;letter-spacing:-.2px;-webkit-text-stroke:0">Guess what it is!</div>
<div class="ph" style="left:2349px;top:782px;font-size:25.1px">Make a guess:</div>
<div class="ph" style="left:2709px;top:782px;font-size:26px">50</div>
<div class="abs" style="left:2751px;top:770.3px;width:142px;height:47.7px;border-radius:12px;background:#eeeeef"></div>
<div class="abs" style="left:2821px;top:782px;width:1.6px;height:26px;background:#d6d6d8"></div>
<svg style="left:2775px;top:783px" width="22" height="24" viewBox="0 0 22 24" stroke="#111" stroke-width="2.1" stroke-linecap="round"><path d="M1.2 12 H20.8"/></svg>
<svg style="left:2847px;top:783px" width="22" height="24" viewBox="0 0 22 24" stroke="#111" stroke-width="2.1" stroke-linecap="round"><path d="M1.2 12 H20.8 M11 2.2 V21.8"/></svg>
<div class="abs" style="left:2522.5px;top:864px;width:196.5px;height:52px;border-radius:9px;background:#3478f6"></div>
<div class="ph" style="left:2541.4px;top:878.6px;font-size:25.3px;color:#fff">Submit Guess</div>
<div class="abs" style="left:2570px;top:1027.5px;width:101.5px;height:52px;border-radius:9px;background:#eb4e3d"></div>
<div class="ph" style="left:2589px;top:1042px;font-size:25px;color:#fff;letter-spacing:-.3px">Reset</div>
<div class="ph" style="left:2526.3px;top:1133px;font-size:24px;letter-spacing:-.33px">GUESSES MADE</div>

<!-- bottom controls -->
<div class="btn" style="left:2240px;top:1756px;width:163px;height:52px"></div>
<svg style="left:2257.3px;top:1768.3px" width="27" height="27" viewBox="0 0 27 27"><circle cx="13.5" cy="13.5" r="13.2" fill="#2f73f2"/><path d="M10.2 8.4 Q10.2 7.2 11.2 7.8 L19.4 12.8 Q20.2 13.5 19.4 14.2 L11.2 19.2 Q10.2 19.8 10.2 18.6 Z" fill="#fff"/></svg>
<svg style="left:2306px;top:1770px" width="24" height="24" viewBox="0 0 24 24" fill="none" stroke="#4a4a4a" stroke-width="2.4" stroke-linejoin="round"><rect x="1.4" y="1.4" width="21.2" height="21.2" rx="2.6"/><path d="M8.6 4.8 L8.6 17 L11.5 14.4 L13.6 19.4 L15.8 18.4 L13.7 13.7 L17.6 13.4 Z" fill="#4a4a4a" stroke="none"/></svg>
<svg style="left:2359.6px;top:1771.6px" width="24" height="21" viewBox="0 0 24 21" fill="none" stroke="#505050" stroke-width="1.6"><rect x="0.9" y="0.9" width="4.8" height="7.2" rx="1.1"/><rect x="9.6" y="0.9" width="4.8" height="7.2" rx="1.1"/><rect x="18.3" y="0.9" width="4.8" height="7.2" rx="1.1"/><rect x="0.9" y="12.3" width="4.8" height="7.2" rx="1.1"/><rect x="9.6" y="12.3" width="4.8" height="7.2" rx="1.1"/><rect x="18.3" y="12.3" width="4.8" height="7.2" rx="1.1"/></svg>
<div class="btn" style="left:2423px;top:1756px;width:63px;height:52px"></div>
<svg style="left:2441.5px;top:1769.5px" width="26" height="25" viewBox="0 0 26 25"><rect x="1.2" y="1.2" width="23.6" height="9.6" rx="4.8" fill="none" stroke="#4e4e4e" stroke-width="2"/><circle cx="6.6" cy="6" r="2.6" fill="#4e4e4e"/><rect x="0.4" y="13.6" width="25.2" height="11" rx="5.5" fill="#4e4e4e"/><circle cx="19.6" cy="19.1" r="3" fill="#fff"/></svg>
<div class="btn" style="left:2505.5px;top:1756px;width:54.5px;height:52px"></div>
<svg style="left:2526px;top:1770.6px" width="14" height="23" viewBox="0 0 14 23"><rect x="1" y="1" width="12" height="21" rx="2.4" fill="#cdcdcd" stroke="#4a4a4a" stroke-width="1.8"/><path d="M5 3.4 H9 M4.6 19.6 H9.4" stroke="#4a4a4a" stroke-width="1.1" stroke-linecap="round"/></svg>
<div class="btn" style="left:2792px;top:1756px;width:208px;height:52px"></div>

<svg style="left:2809.9px;top:1767.8px" width="30" height="30" viewBox="0 0 30 30" fill="none" stroke="#484848" stroke-width="3" stroke-linecap="round" stroke-linejoin="round"><circle cx="11.5" cy="11.5" r="9"/><path d="M18.6 18.6 L25.6 25.6" stroke-width="3.6"/><path d="M7.6 11.3 H15.4" stroke-width="2.2"/></svg>
<svg style="left:2858.0px;top:1767.8px" width="30" height="30" viewBox="0 0 30 30" fill="none" stroke="#484848" stroke-width="3" stroke-linecap="round" stroke-linejoin="round"><circle cx="11.5" cy="11.5" r="9"/><path d="M18.6 18.6 L25.6 25.6" stroke-width="3.6"/><path d="M9.2 9 L11.9 7.2 V16" stroke-width="2"/></svg>
<svg style="left:2905.7px;top:1767.8px" width="30" height="30" viewBox="0 0 30 30" fill="none" stroke="#858585" stroke-width="3" stroke-linecap="round" stroke-linejoin="round"><circle cx="11.5" cy="11.5" r="9"/><path d="M18.6 18.6 L25.6 25.6" stroke-width="3.6"/><rect x="8" y="8" width="7" height="7" rx="1.4" stroke-width="2"/></svg>
<svg style="left:2953.7px;top:1767.8px" width="30" height="30" viewBox="0 0 30 30" fill="none" stroke="#484848" stroke-width="3" stroke-linecap="round" stroke-linejoin="round"><circle cx="11.5" cy="11.5" r="9"/><path d="M18.6 18.6 L25.6 25.6" stroke-width="3.6"/><path d="M7.6 11.5 H15.4 M11.5 7.6 V15.4" stroke-width="2.2"/></svg>
</div>
</body>
</html>
